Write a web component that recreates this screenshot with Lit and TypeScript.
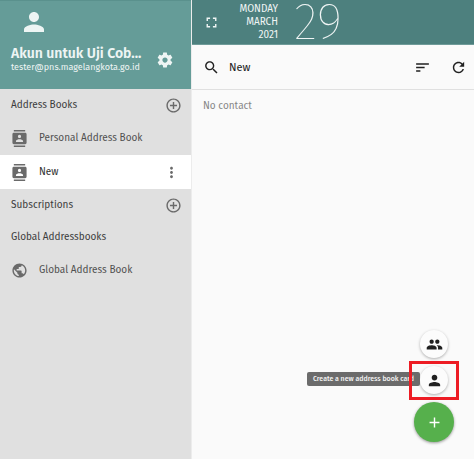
import { LitElement, html, css, svg } from "lit";
import { customElement, property } from "lit/decorators.js";

const icons: Record<string, string> = {
  person: "M12 12c2.21 0 4-1.79 4-4s-1.79-4-4-4-4 1.79-4 4 1.79 4 4 4zm0 2c-2.67 0-8 1.34-8 4v2h16v-2c0-2.66-5.33-4-8-4z",
  settings: "M19.43 12.98c.04-.32.07-.64.07-.98s-.03-.66-.07-.98l2.11-1.65c.19-.15.24-.42.12-.64l-2-3.46c-.12-.22-.39-.3-.61-.22l-2.49 1c-.52-.4-1.08-.73-1.69-.98l-.38-2.65C14.46 2.18 14.25 2 14 2h-4c-.25 0-.46.18-.49.42l-.38 2.65c-.61.25-1.17.59-1.69.98l-2.49-1c-.23-.09-.49 0-.61.22l-2 3.46c-.13.22-.07.49.12.64l2.11 1.65c-.04.32-.07.65-.07.98s.03.66.07.98l-2.11 1.65c-.19.15-.24.42-.12.64l2 3.46c.12.22.39.3.61.22l2.49-1c.52.4 1.08.73 1.69.98l.38 2.65c.03.24.24.42.49.42h4c.25 0 .46-.18.49-.42l.38-2.65c.61-.25 1.17-.59 1.69-.98l2.49 1c.23.09.49 0 .61-.22l2-3.46c.12-.22.07-.49-.12-.64l-2.11-1.65zM12 15.5c-1.93 0-3.5-1.57-3.5-3.5s1.57-3.5 3.5-3.5 3.5 1.57 3.5 3.5-1.57 3.5-3.5 3.5z",
  addCircle: "M13 7h-2v4H7v2h4v4h2v-4h4v-2h-4V7zm-1-5C6.48 2 2 6.48 2 12s4.48 10 10 10 10-4.48 10-10S17.52 2 12 2zm0 18c-4.41 0-8-3.59-8-8s3.59-8 8-8 8 3.59 8 8-3.59 8-8 8z",
  contacts: "M20 0H4v2h16V0zM4 24h16v-2H4v2zM20 4H4c-1.1 0-2 .9-2 2v12c0 1.1.9 2 2 2h16c1.1 0 2-.9 2-2V6c0-1.1-.9-2-2-2zm-8 2.75c1.24 0 2.25 1.01 2.25 2.25s-1.01 2.25-2.25 2.25S9.75 10.24 9.75 9 10.76 6.75 12 6.75zM17 17H7v-1.5c0-1.67 3.33-2.5 5-2.5s5 .83 5 2.5V17z",
  more: "M12 8c1.1 0 2-.9 2-2s-.9-2-2-2-2 .9-2 2 .9 2 2 2zm0 2c-1.1 0-2 .9-2 2s.9 2 2 2 2-.9 2-2-.9-2-2-2zm0 6c-1.1 0-2 .9-2 2s.9 2 2 2 2-.9 2-2-.9-2-2-2z",
  globe: "M12 2C6.48 2 2 6.48 2 12s4.48 10 10 10 10-4.48 10-10S17.52 2 12 2zm-1 17.93c-3.95-.49-7-3.85-7-7.93 0-.62.08-1.21.21-1.79L9 15v1c0 1.1.9 2 2 2v1.93zm6.9-2.54c-.26-.81-1-1.39-1.9-1.39h-1v-3c0-.55-.45-1-1-1H8v-2h2c.55 0 1-.45 1-1V7h2c1.1 0 2-.9 2-2v-.41c2.93 1.19 5 4.06 5 7.41 0 2.08-.8 3.97-2.1 5.39z",
  fullscreen: "M7 14H5v5h5v-2H7v-3zm-2-4h2V7h3V5H5v5zm12 7h-3v2h5v-5h-2v3zM14 5v2h3v3h2V5h-5z",
  search: "M15.5 14h-.79l-.28-.27C15.41 12.59 16 11.11 16 9.5 16 5.91 13.09 3 9.5 3S3 5.91 3 9.5 5.91 16 9.5 16c1.61 0 3.09-.59 4.23-1.57l.27.28v.79l5 4.99L20.49 19l-4.99-5zm-6 0C7.01 14 5 11.99 5 9.5S7.01 5 9.5 5 14 7.01 14 9.5 11.99 14 9.5 14z",
  sort: "M3 18h6v-2H3v2zM3 6v2h18V6H3zm0 7h12v-2H3v2z",
  refresh: "M17.65 6.35C16.2 4.9 14.21 4 12 4c-4.42 0-7.99 3.58-7.99 8s3.57 8 7.99 8c3.73 0 6.84-2.55 7.73-6h-2.08c-.82 2.33-3.04 4-5.65 4-3.31 0-6-2.69-6-6s2.69-6 6-6c1.66 0 3.14.69 4.22 1.78L13 11h7V4l-2.35 2.35z",
  group: "M16 11c1.66 0 2.99-1.34 2.99-3S17.66 5 16 5c-1.66 0-3 1.34-3 3s1.34 3 3 3zm-8 0c1.66 0 2.99-1.34 2.99-3S9.66 5 8 5C6.34 5 5 6.34 5 8s1.34 3 3 3zm0 2c-2.33 0-7 1.17-7 3.5V19h14v-2.5c0-2.33-4.67-3.5-7-3.5zm8 0c-.29 0-.62.02-.97.05 1.16.84 1.97 1.97 1.97 3.45V19h6v-2.5c0-2.33-4.67-3.5-7-3.5z",
  add: "M19 13h-6v6h-2v-6H5v-2h6V5h2v6h6v2z",
};

@customElement("md-icon")
class MdIcon extends LitElement {
  @property() name = "";
  static styles = css`
    :host {
      display: block;
      flex: none;
      width: 17px;
      height: 17px;
    }
    .glyph {
      display: block;
      width: 100%;
      height: 100%;
      fill: currentColor;
    }
  `;
  render() {
    return html`<svg class="glyph" viewBox="0 0 24 24" aria-hidden="true">
      ${svg`<path d=${icons[this.name] ?? ""}></path>`}
    </svg>`;
  }
}

@customElement("app-root")
class AppRoot extends LitElement {
  static styles = css`
    :host {
      display: grid;
      grid-template-columns: 192px 1fr;
      box-sizing: border-box;
      min-height: 100vh;
      padding: 0 1px 2px 0;
      position: relative;
      background: #fff;
      font-family: "Fira Sans", "Noto Sans", sans-serif;
      font-size: 10px;
      line-height: 13px;
      color: #3c3c3c;
    }
    button {
      display: grid;
      place-items: center;
      flex: none;
      margin: 0;
      padding: 0;
      border: 0;
      background: none;
      color: inherit;
      font: inherit;
    }
    h1, h2, p {
      margin: 0;
      font-size: inherit;
      font-weight: inherit;
    }
    .sidebar {
      background: #e0e0e0;
      border-right: 1px solid #ececec;
    }
    .profile {
      box-sizing: border-box;
      height: 89px;
      padding: 6px 17px 0 11px;
      background: #659c98;
      border-top: 1px solid #5a918d;
      color: #eef5f4;
    }
    .avatar {
      width: 30px;
      height: 30px;
      margin-left: 8px;
    }
    .account {
      display: flex;
      align-items: center;
      justify-content: space-between;
      margin-top: 9px;
    }
    .name {
      font-size: 14px;
      line-height: 16px;
      font-weight: 600;
      white-space: nowrap;
    }
    .mail {
      font-size: 9px;
      line-height: 11px;
      white-space: nowrap;
    }
    .gear {
      width: 18px;
      height: 18px;
    }
    .section, .book {
      box-sizing: border-box;
      display: flex;
      align-items: center;
      padding: 0 9px 0 11px;
    }
    .section {
      justify-content: space-between;
      height: 32px;
    }
    .book {
      gap: 11px;
      height: 34px;
      padding-right: 11px;
      color: #505050;
    }
    .book a {
      flex: 1;
      color: inherit;
      text-decoration: none;
    }
    .book.current {
      background: #fff;
      color: #303030;
    }
    .dim {
      color: #6a6a6a;
    }
    .main {
      background: #fafafa;
    }
    .top {
      box-sizing: border-box;
      display: flex;
      align-items: center;
      height: 45px;
      padding: 0 11px;
      background: #4d807e;
      border-bottom: 1px solid #6f9b99;
      color: #f0f5f5;
    }
    .date {
      display: flex;
      align-items: center;
      gap: 16px;
      margin-left: 16px;
    }
    .words {
      width: 42px;
      text-align: right;
    }
    .day {
      font-size: 50px;
      line-height: 44px;
      font-weight: 100;
    }
    .tools {
      box-sizing: border-box;
      display: flex;
      align-items: center;
      height: 45px;
      padding: 0 7px 0 11px;
      border-bottom: 1px solid #e0e0e0;
      color: #212121;
    }
    .title {
      flex: 1;
      margin-left: 9px;
      font-size: 11px;
    }
    .refresh {
      margin-left: 19px;
    }
    .empty {
      padding: 10px 11px;
      color: #868686;
    }
    .actions {
      position: absolute;
      right: 21px;
      bottom: 19px;
      display: flex;
      flex-direction: column;
      align-items: center;
      gap: 8px;
    }
    .mini {
      width: 28px;
      height: 28px;
      border-radius: 50%;
      background: #fcfcfc;
      color: #212121;
      box-shadow: 0 1px 3px rgba(0, 0, 0, 0.3);
    }
    .fab {
      width: 40px;
      height: 40px;
      border-radius: 50%;
      background: #56b04c;
      color: #fff;
      box-shadow: 0 1px 3px rgba(0, 0, 0, 0.4);
    }
    .speed {
      position: relative;
    }
    .tip {
      position: absolute;
      right: 28px;
      top: 6px;
      box-sizing: border-box;
      width: 113px;
      height: 14px;
      border-radius: 2px;
      background: #6b6b6b;
      color: #f4f4f4;
      font-size: 7px;
      line-height: 13px;
      font-weight: 500;
      text-align: center;
      white-space: nowrap;
    }
    .frame {
      position: absolute;
      inset: -5px -11px -6px;
      border: 3px solid #ed1c24;
      pointer-events: none;
    }
  `;

  section(label: string, add: boolean) {
    return html`<div class="section">
      <h2>${label}</h2>
      ${add ? html`<button class="dim" aria-label="Add to ${label}"><md-icon name="addCircle"></md-icon></button>` : ""}
    </div>`;
  }

  book(label: string, icon: string, current = false) {
    return html`<div class="book ${current ? "current" : ""}">
      <md-icon class="dim" name=${icon}></md-icon>
      <a href="#">${label}</a>
      ${current ? html`<button class="dim" aria-label="Options"><md-icon name="more"></md-icon></button>` : ""}
    </div>`;
  }

  render() {
    return html`
      <nav class="sidebar">
        <div class="profile">
          <md-icon class="avatar" name="person"></md-icon>
          <div class="account">
            <div>
              <h1 class="name">Akun untuk Uji Cob...</h1>
              <p class="mail">tester@pns.magelangkota.go.id</p>
            </div>
            <button aria-label="Settings"><md-icon class="gear" name="settings"></md-icon></button>
          </div>
        </div>
        ${this.section("Address Books", true)}
        ${this.book("Personal Address Book", "contacts")}
        ${this.book("New", "contacts", true)}
        ${this.section("Subscriptions", true)}
        ${this.section("Global Addressbooks", false)}
        ${this.book("Global Address Book", "globe")}
      </nav>
      <main class="main">
        <header class="top">
          <button aria-label="Full screen"><md-icon name="fullscreen"></md-icon></button>
          <div class="date">
            <div class="words">
              <div>MONDAY</div>
              <div>MARCH</div>
              <div>2021</div>
            </div>
            <div class="day">29</div>
          </div>
        </header>
        <div class="tools">
          <button aria-label="Search"><md-icon name="search"></md-icon></button>
          <h2 class="title">New</h2>
          <button aria-label="Sort"><md-icon name="sort"></md-icon></button>
          <button class="refresh" aria-label="Refresh"><md-icon name="refresh"></md-icon></button>
        </div>
        <p class="empty">No contact</p>
      </main>
      <div class="actions">
        <button class="mini" aria-label="Create a list"><md-icon name="group"></md-icon></button>
        <div class="speed">
          <div class="tip" role="tooltip" id="card-tip">Create a new address book card</div>
          <button class="mini" aria-labelledby="card-tip"><md-icon name="person"></md-icon></button>
          <div class="frame"></div>
        </div>
        <button class="fab" aria-label="Add"><md-icon name="add"></md-icon></button>
      </div>
    `;
  }
}
